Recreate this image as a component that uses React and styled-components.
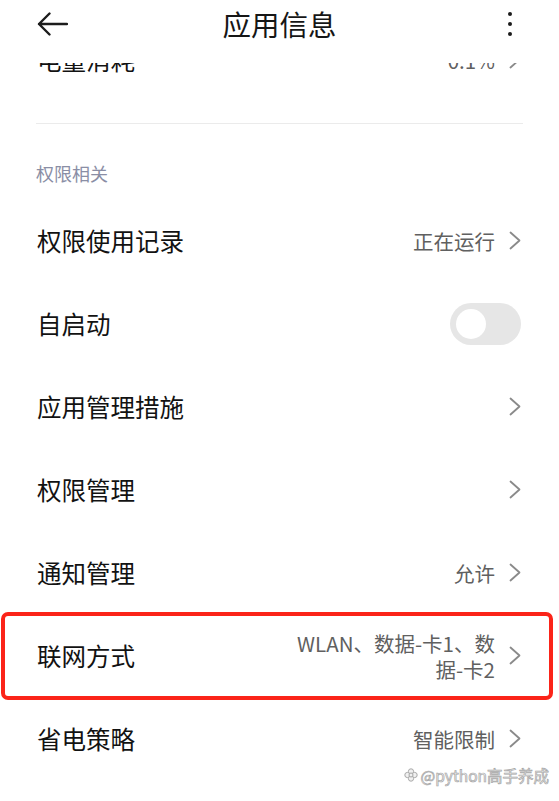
import React, { useLayoutEffect, useRef } from "react";
import styled, { createGlobalStyle } from "styled-components";

const GlobalStyle = createGlobalStyle`
  * {
    box-sizing: border-box;
  }

  html,
  body {
    margin: 0;
    padding: 0;
    background: #fff;
  }

  body {
    font-family: "Noto Sans CJK SC", "Noto Sans", sans-serif;
    color: #111;
  }
`;

const items = [
  { title: "权限使用记录", value: "正在运行" },
  { title: "自启动", toggle: true },
  { title: "应用管理措施" },
  { title: "权限管理" },
  { title: "通知管理", value: "允许" },
  { title: "联网方式", value: "WLAN、数据-卡1、数据-卡2", marked: true },
  { title: "省电策略", value: "智能限制" },
];

const BackIcon = () => (
  <svg width="31" height="26" viewBox="0 0 31 26" fill="none">
    <path
      d="M30 13H2M12.5 2.5L2 13l10.5 10.5"
      stroke="#1c1c1c"
      strokeWidth="2.4"
      strokeLinecap="round"
      strokeLinejoin="round"
    />
  </svg>
);

const Chevron = () => (
  <svg width="12" height="19" viewBox="0 0 12 19" fill="none">
    <path
      d="M1.5 1.5l9 8-9 8"
      stroke="#8a8a8a"
      strokeWidth="1.8"
      strokeLinecap="round"
      strokeLinejoin="round"
    />
  </svg>
);

const MarkIcon = () => (
  <svg width="14" height="14" viewBox="0 0 14 14" fill="none">
    <g stroke="#a8a8a8" strokeWidth="1" fill="#f1f1f1">
      <circle cx="7" cy="3.4" r="2.6" />
      <circle cx="3.4" cy="7" r="2.6" />
      <circle cx="10.6" cy="7" r="2.6" />
      <circle cx="7" cy="10.6" r="2.6" />
      <circle cx="7" cy="7" r="2" />
    </g>
  </svg>
);

const SettingRow = ({ title, value, toggle, marked }) => (
  <Row $marked={marked}>
    <RowTitle>{title}</RowTitle>
    {toggle ? (
      <Switch>
        <Knob />
      </Switch>
    ) : (
      <Trail>
        {value && <Value>{value}</Value>}
        <Chevron />
      </Trail>
    )}
  </Row>
);

export default function App() {
  const listRef = useRef(null);

  // the list is opened already scrolled a little past its first entry
  useLayoutEffect(() => {
    if (listRef.current) listRef.current.scrollTop = 45;
  }, []);

  return (
    <Page>
      <GlobalStyle />
      <Header>
        <BackButton>
          <BackIcon />
        </BackButton>
        <Title>应用信息</Title>
        <MoreButton>
          <Dot />
          <Dot />
          <Dot />
        </MoreButton>
      </Header>

      <List ref={listRef}>
        <SettingRow title="电量消耗" value="0.1%" />
        <Divider />
        <SectionLabel>权限相关</SectionLabel>
        {items.map((item) => (
          <SettingRow key={item.title} {...item} />
        ))}
        <Spacer />
      </List>

      <Watermark>
        <MarkIcon />
        <span>@python高手养成</span>
      </Watermark>
    </Page>
  );
}

const Page = styled.div`
  position: relative;
  display: flex;
  flex-direction: column;
  width: 100%;
  height: 100vh;
  background: #fff;
  overflow: hidden;
`;

const Header = styled.header`
  flex: none;
  display: grid;
  grid-template-columns: 1fr auto 1fr;
  align-items: center;
  height: 63px;
  padding: 0 37px 15px 37px;
  background: #fff;
`;

const BackButton = styled.div`
  justify-self: start;
  display: flex;
  align-items: center;
`;

const Title = styled.h1`
  margin: 0;
  font-size: 28.5px;
  font-weight: 400;
  line-height: 36px;
  color: #161616;
`;

const MoreButton = styled.div`
  justify-self: end;
  display: flex;
  flex-direction: column;
  gap: 6px;
  margin-right: 10px;
`;

const Dot = styled.span`
  width: 4px;
  height: 4px;
  border-radius: 50%;
  background: #1c1c1c;
`;

const List = styled.main`
  flex: 1;
  overflow: hidden;
`;

const Row = styled.div`
  position: relative;
  display: flex;
  align-items: center;
  height: 83px;
  padding: 0 38px 0 37px;

  &::after {
    content: "";
    display: ${({ $marked }) => ($marked ? "block" : "none")};
    position: absolute;
    top: -2px;
    bottom: -3px;
    left: 1px;
    right: 6px;
    border: 4.5px solid #fb2419;
    border-radius: 7px;
    pointer-events: none;
  }
`;

const RowTitle = styled.div`
  flex: 1;
  font-size: 24.5px;
  line-height: 32px;
  color: #121212;
  white-space: nowrap;
`;

const Trail = styled.div`
  display: flex;
  align-items: center;
  gap: 14px;
`;

const Value = styled.div`
  max-width: 210px;
  font-size: 20.5px;
  line-height: 26px;
  color: #606060;
  text-align: right;
`;

const Switch = styled.div`
  display: flex;
  align-items: center;
  width: 71px;
  height: 42px;
  padding: 0 6px;
  border-radius: 21px;
  background: #e6e6e6;
`;

const Knob = styled.span`
  width: 30px;
  height: 30px;
  border-radius: 50%;
  background: #fff;
`;

const Divider = styled.div`
  height: 1px;
  margin: 22px 36px 0 36px;
  background: #ebebeb;
`;

const SectionLabel = styled.div`
  padding: 37px 36px 14px;
  font-size: 18px;
  line-height: 24px;
  color: #8a8ea5;
`;

const Spacer = styled.div`
  height: 40px;
`;

const Watermark = styled.div`
  position: absolute;
  right: 10px;
  bottom: 16px;
  display: flex;
  align-items: center;
  gap: 3px;
  font-family: "Noto Sans CJK SC", "Noto Sans", sans-serif;
  font-size: 15.5px;
  line-height: 20px;
  color: #f3f3f3;
  -webkit-text-stroke: 0.7px #a6a6a6;
`;
